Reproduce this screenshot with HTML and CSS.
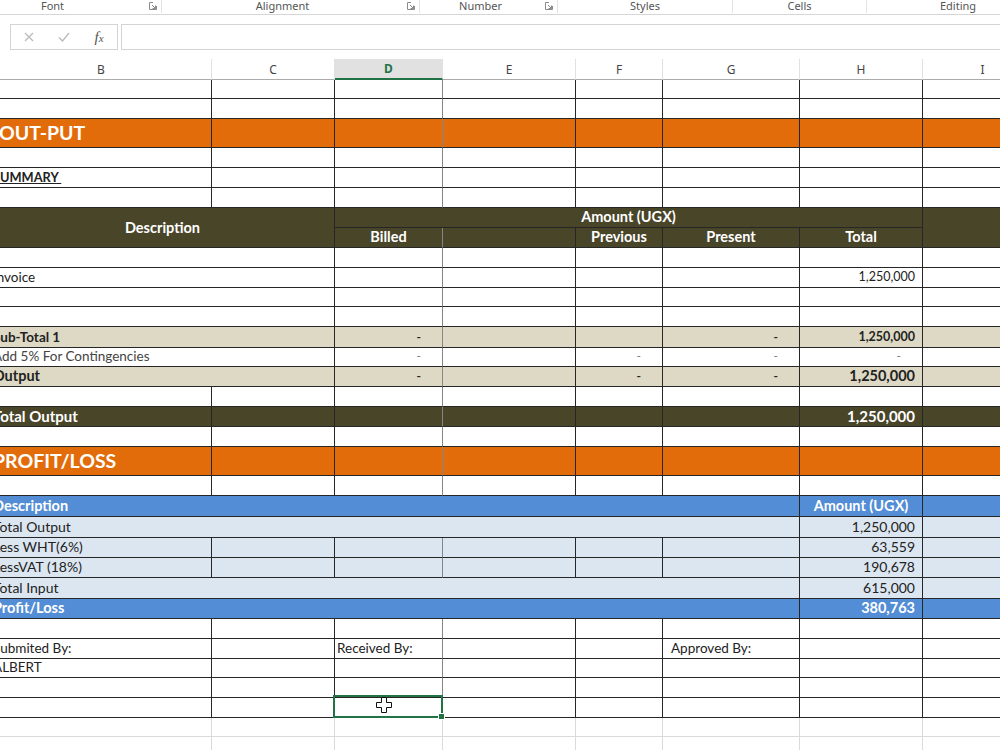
FILE: index.html
```html
<!DOCTYPE html>
<html lang="en">
<head>
    <meta charset="UTF-8">
    <meta name="viewport" content="width=device-width, initial-scale=1.0">
    <title>Output Summary - Excel</title>
    <link rel="stylesheet" href="styles.css">
</head>
<body>
    <div class="ribbon">
        <div class="rgroup g-font"><span class="label">Font</span><span class="launcher"><svg width="8" height="8" viewBox="0 0 8 8"><path d="M4 0.5H0.5V7.5H7.5V4M3 3L6.5 6.5M3.5 6.5H6.5V3.5" fill="none" stroke="#8a8a8a"/></svg></span></div>
        <div class="rgroup g-align"><span class="label">Alignment</span><span class="launcher"><svg width="8" height="8" viewBox="0 0 8 8"><path d="M4 0.5H0.5V7.5H7.5V4M3 3L6.5 6.5M3.5 6.5H6.5V3.5" fill="none" stroke="#8a8a8a"/></svg></span></div>
        <div class="rgroup g-number"><span class="label">Number</span><span class="launcher"><svg width="8" height="8" viewBox="0 0 8 8"><path d="M4 0.5H0.5V7.5H7.5V4M3 3L6.5 6.5M3.5 6.5H6.5V3.5" fill="none" stroke="#8a8a8a"/></svg></span></div>
        <div class="rgroup g-styles"><span class="label">Styles</span></div>
        <div class="rgroup g-cells"><span class="label">Cells</span></div>
        <div class="rgroup g-editing"><span class="label">Editing</span></div>
    </div>

    <div class="formula-bar">
        <div class="fx-box">
            <span class="fx-btn cancel"><svg width="10" height="10" viewBox="0 0 10 10"><path d="M1 1L9 9M9 1L1 9" stroke="#b9b9b9" stroke-width="1.2"/></svg></span>
            <span class="fx-btn enter"><svg width="12" height="10" viewBox="0 0 12 10"><path d="M1 5.5L4.5 9L11 1" fill="none" stroke="#b9b9b9" stroke-width="1.2"/></svg></span>
            <span class="fx-btn insert"><i>f<small>x</small></i></span>
        </div>
        <div class="formula-input"></div>
    </div>

    <table class="sheet">
        <colgroup>
            <col class="col-b"><col class="col-c"><col class="col-d"><col class="col-e">
            <col class="col-f"><col class="col-g"><col class="col-h"><col class="col-i">
        </colgroup>
        <tr class="colhead">
            <th>B</th><th>C</th><th class="active">D</th><th>E</th><th>F</th><th>G</th><th>H</th><th>I</th>
        </tr>
        <tr class="h19"><td></td><td></td><td class="d"></td><td></td><td></td><td></td><td></td><td></td></tr>
        <tr><td></td><td></td><td class="d"></td><td></td><td></td><td></td><td></td><td></td></tr>
        <tr class="h29 orange"><td class="title out">OUT-PUT</td><td></td><td class="d"></td><td></td><td></td><td></td><td></td><td></td></tr>
        <tr><td></td><td></td><td class="d"></td><td></td><td></td><td></td><td></td><td></td></tr>
        <tr><td class="summary">SUMMARY&nbsp;</td><td></td><td class="d"></td><td></td><td></td><td></td><td></td><td></td></tr>
        <tr><td></td><td></td><td class="d"></td><td></td><td></td><td></td><td></td><td></td></tr>
        <tr class="olive head">
            <td colspan="2" rowspan="2" class="mid">Description</td>
            <td colspan="5">Amount (UGX)</td>
            <td rowspan="2"></td>
        </tr>
        <tr class="olive head">
            <td class="d">Billed</td><td></td><td>Previous</td><td>Present</td><td>Total</td>
        </tr>
        <tr><td colspan="2"></td><td class="d"></td><td></td><td></td><td></td><td></td><td></td></tr>
        <tr><td colspan="2">Invoice</td><td class="d"></td><td></td><td></td><td></td><td class="num small">1,250,000</td><td></td></tr>
        <tr class="h19"><td colspan="2"></td><td class="d"></td><td></td><td></td><td></td><td></td><td></td></tr>
        <tr><td colspan="2"></td><td class="d"></td><td></td><td></td><td></td><td></td><td></td></tr>
        <tr class="h21 tan bold">
            <td colspan="2">Sub-Total 1</td><td class="d acct">-</td><td></td><td></td><td class="acct">-</td><td class="num small">1,250,000</td><td></td>
        </tr>
        <tr class="h19 light">
            <td colspan="2">Add 5% For Contingencies</td><td class="d acct">-</td><td></td><td class="acct">-</td><td class="acct">-</td><td class="acct">-</td><td></td>
        </tr>
        <tr class="tan bold large">
            <td colspan="2">Output</td><td class="d acct">-</td><td></td><td class="acct">-</td><td class="acct">-</td><td class="num">1,250,000</td><td></td>
        </tr>
        <tr><td></td><td></td><td class="d"></td><td></td><td></td><td></td><td></td><td></td></tr>
        <tr class="olive bold large">
            <td>Total Output</td><td></td><td class="d"></td><td></td><td></td><td></td><td class="num">1,250,000</td><td></td>
        </tr>
        <tr><td></td><td></td><td class="d"></td><td></td><td></td><td></td><td></td><td></td></tr>
        <tr class="h29 orange"><td class="title">PROFIT/LOSS</td><td></td><td class="d"></td><td></td><td></td><td></td><td></td><td></td></tr>
        <tr><td></td><td></td><td class="d"></td><td></td><td></td><td></td><td></td><td></td></tr>
        <tr class="h21 blue bold">
            <td colspan="6">Description</td><td class="center">Amount (UGX)</td><td></td>
        </tr>
        <tr class="h21 pale">
            <td colspan="6">Total Output</td><td class="num">1,250,000</td><td></td>
        </tr>
        <tr class="pale">
            <td>Less WHT(6%)</td><td></td><td class="d"></td><td></td><td></td><td></td><td class="num">63,559</td><td></td>
        </tr>
        <tr class="pale">
            <td>LessVAT (18%)</td><td></td><td class="d"></td><td></td><td></td><td></td><td class="num">190,678</td><td></td>
        </tr>
        <tr class="h21 pale">
            <td colspan="6">Total Input</td><td class="num">615,000</td><td></td>
        </tr>
        <tr class="blue bold">
            <td colspan="6">Profit/Loss</td><td class="num">380,763</td><td></td>
        </tr>
        <tr><td></td><td></td><td class="d"></td><td></td><td></td><td></td><td></td><td></td></tr>
        <tr>
            <td>Submited By:</td><td></td><td class="d">Received By:</td><td></td><td></td><td class="indent">Approved By:</td><td></td><td></td>
        </tr>
        <tr class="h19"><td>ALBERT</td><td></td><td class="d"></td><td></td><td></td><td></td><td></td><td></td></tr>
        <tr><td></td><td></td><td class="d"></td><td></td><td></td><td></td><td></td><td></td></tr>
        <tr>
            <td></td><td></td>
            <td class="d sel">
                <svg class="cursor" width="16" height="16" viewBox="0 0 16 16"><path d="M5.5 0.5H10.5V5.5H15.5V10.5H10.5V15.5H5.5V10.5H0.5V5.5H5.5Z" fill="#fff" stroke="#111"/></svg>
            </td>
            <td></td><td></td><td></td><td></td><td></td>
        </tr>
        <tr class="h19 grid"><td></td><td></td><td></td><td></td><td></td><td></td><td></td><td></td></tr>
        <tr class="grid"><td></td><td></td><td></td><td></td><td></td><td></td><td></td><td></td></tr>
    </table>
</body>
</html>
```

FILE: styles.css
```css
html, body {
    margin: 0;
    overflow: hidden;
    background: #fff;
}
body {
    width: 1000px;
    height: 750px;
    font-family: Lato, "Liberation Sans", sans-serif;
    color: #222;
}

/* ribbon group labels */
.ribbon {
    display: flex;
    height: 14px;
    margin-left: -40px;
    border-bottom: 1px solid #d6d6d6;
    font-family: "Noto Sans", sans-serif;
    font-size: 11px;
    line-height: 12px;
    color: #555;
}
.rgroup {
    display: flex;
    flex-shrink: 0;
    align-items: flex-start;
    box-sizing: border-box;
    height: 13px;
    border-right: 1px solid #e3e3e3;
}
.rgroup .label {
    flex: 1;
    text-align: center;
}
.rgroup .launcher {
    width: 16px;
    display: flex;
    justify-content: center;
    padding-top: 2px;
}
.g-font { width: 202px; }
.g-align { width: 258px; }
.g-number { width: 138px; }
.g-styles { width: 175px; }
.g-cells { width: 134px; }
.g-editing { width: 182px; border-right: none; }

/* formula bar */
.formula-bar {
    display: flex;
    gap: 3px;
    padding: 9px 0 9px 10px;
    margin-right: -10px;
}
.fx-box {
    width: 108px;
    height: 26px;
    box-sizing: border-box;
    border: 1px solid #d4d4d4;
    display: flex;
    align-items: center;
}
.fx-btn {
    display: flex;
    justify-content: center;
    align-items: center;
}
.fx-btn.cancel { width: 35px; }
.fx-btn.enter { width: 36px; }
.fx-btn.insert {
    width: 34px;
    font-family: "Liberation Serif", serif;
    font-size: 15px;
    color: #555;
}
.fx-btn.insert small {
    font-size: 11px;
}
.formula-input {
    flex: 1;
    height: 26px;
    box-sizing: border-box;
    border: 1px solid #d4d4d4;
}

/* sheet */
.sheet {
    border-collapse: separate;
    border-spacing: 0;
    table-layout: fixed;
    width: 1052px;
    margin-left: -9px;
}
.col-b { width: 221px; }
.col-c { width: 123px; }
.col-d { width: 108px; }
.col-e { width: 133px; }
.col-f { width: 87px; }
.col-g { width: 137px; }
.col-h { width: 123px; }
.col-i { width: 120px; }

.sheet td {
    height: 20px;
    box-sizing: border-box;
    padding: 0 2px 2px;
    border-right: 1px solid #262626;
    border-bottom: 1px solid #262626;
    font-size: 13.5px;
    line-height: 16px;
    white-space: nowrap;
    overflow: hidden;
    vertical-align: bottom;
}
.sheet td.d {
    border-right-color: #858585;
}
.sheet tr.h19 td { height: 19px; }
.sheet tr.h21 td { height: 21px; }
.sheet tr.h29 td { height: 29px; }

.colhead th {
    height: 21px;
    box-sizing: border-box;
    padding: 0;
    border-right: 1px solid #e1e1e1;
    border-bottom: 1px solid #ababab;
    font-family: "Noto Sans", sans-serif;
    font-size: 12px;
    font-weight: normal;
    color: #444;
}
.colhead th.active {
    background: #e1e1e1;
    color: #217346;
    font-weight: bold;
    border-bottom: 2px solid #217346;
}

.sheet .orange td { background: #e36c0a; }
.sheet .olive td { background: #494529; color: #fff; }
.sheet .tan td { background: #ddd9c4; }
.sheet .blue td { background: #538dd5; color: #fff; font-size: 14.5px; }
.sheet .pale td { background: #dce6f1; font-size: 14px; }
.sheet .bold td { font-weight: bold; }
.sheet .large td { font-size: 14.5px; }
.sheet .olive.large td { font-size: 15px; }
.sheet .grid td { border-color: #dadada; }

.sheet td.title {
    color: #fff;
    font-size: 19.5px;
    font-weight: bold;
    line-height: 22px;
    padding-bottom: 3px;
}
.sheet td.title.out {
    padding-left: 8px;
}
.sheet td.summary {
    font-size: 12.8px;
    font-weight: bold;
    text-decoration: underline;
}
.sheet .head td {
    font-size: 14.5px;
    font-weight: bold;
    text-align: center;
}
.sheet .head td.mid {
    vertical-align: middle;
    padding-bottom: 0;
}
.sheet td.num {
    text-align: right;
    padding-right: 7px;
}
.sheet td.small {
    font-size: 12.5px;
}
.sheet td.acct {
    text-align: right;
    padding-right: 21px;
    font-size: 12px;
}
.sheet td.center {
    text-align: center;
}
.sheet td.indent {
    padding-left: 8px;
}
.sheet .light td {
    color: #444;
}
.sheet .light td.acct {
    color: #777;
}

/* active cell */
.sheet td.sel {
    position: relative;
    overflow: visible;
}
.sel::before {
    content: "";
    position: absolute;
    left: -2px;
    top: -3px;
    right: -1px;
    bottom: -1px;
    border: 2px solid #217346;
}
.sel::after {
    content: "";
    position: absolute;
    right: -3px;
    bottom: -3px;
    width: 5px;
    height: 5px;
    background: #217346;
    border: 1px solid #fff;
}
.cursor {
    position: absolute;
    left: 41px;
    top: -1px;
}
```
